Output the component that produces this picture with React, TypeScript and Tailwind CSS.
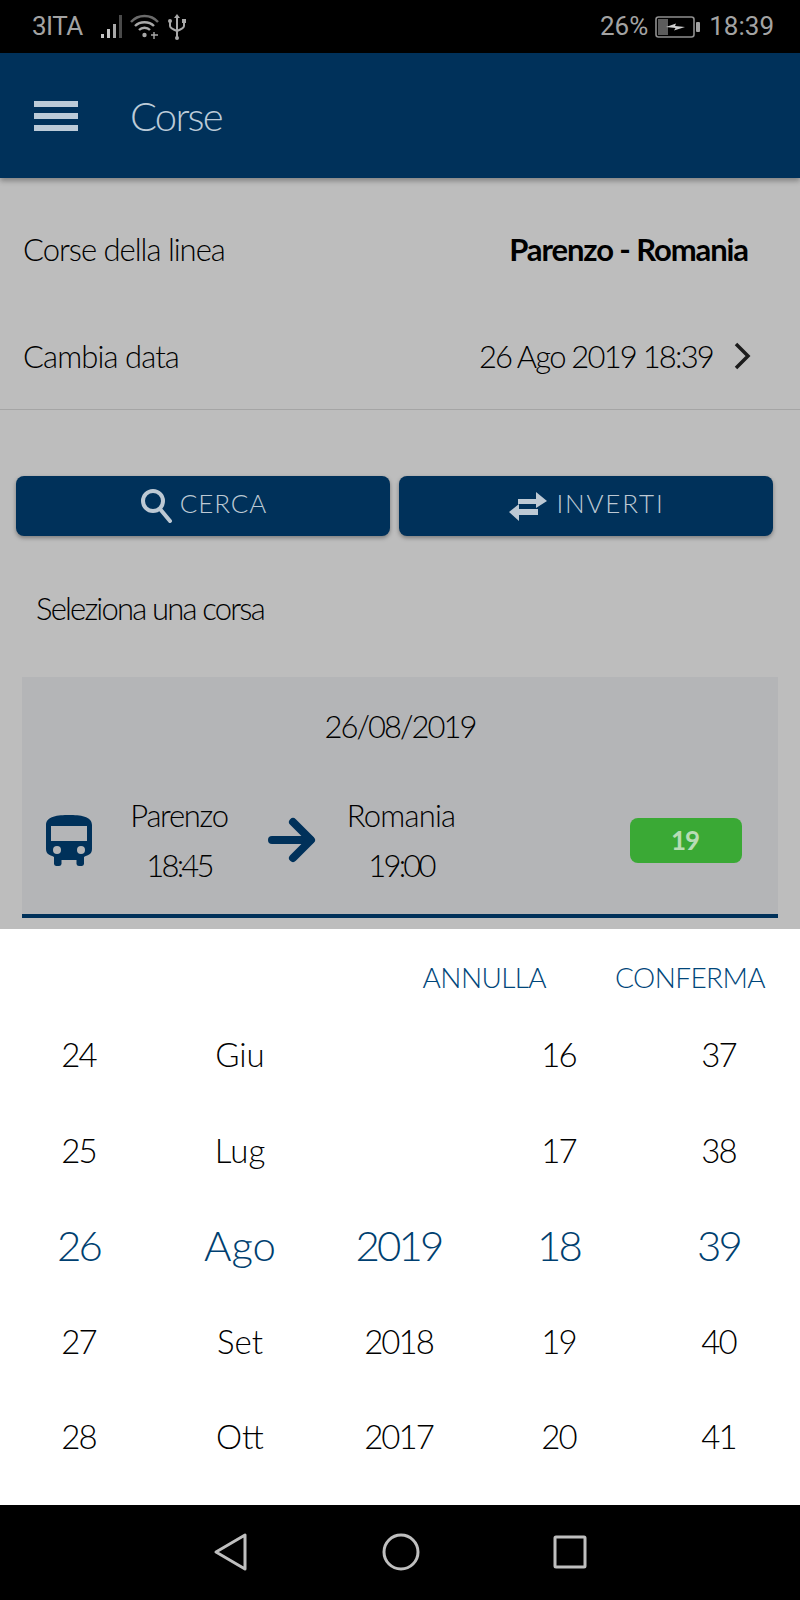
import React from "react";

const font = { fontFamily: "Lato, sans-serif" };

type Wheel = { items: string[]; selected: number; numeric: boolean };

const wheels: Wheel[] = [
  { items: ["24", "25", "26", "27", "28"], selected: 2, numeric: true },
  { items: ["Giu", "Lug", "Ago", "Set", "Ott"], selected: 2, numeric: false },
  { items: ["", "", "2019", "2018", "2017"], selected: 2, numeric: true },
  { items: ["16", "17", "18", "19", "20"], selected: 2, numeric: true },
  { items: ["37", "38", "39", "40", "41"], selected: 2, numeric: true },
];

function StatusBar() {
  return (
    <div className="h-[53px] shrink-0 bg-black flex items-center justify-between pl-[32px] pr-[26px] text-[#a3a3a3] text-[26px] font-['Roboto',sans-serif]">
      <div className="flex items-center">
        <span className="tracking-[-0.5px]">3ITA</span>
        <svg width="26" height="26" viewBox="0 0 26 26" className="ml-[18px]">
          <rect x="0" y="20" width="3" height="4" fill="#c4c4c4" />
          <rect x="6" y="15" width="3" height="9" fill="#c4c4c4" />
          <rect x="12" y="10" width="3" height="14" fill="#a8a8a8" />
          <rect x="18" y="1" width="3" height="23" fill="#4a4a4a" />
        </svg>
        <svg width="30" height="28" viewBox="0 0 30 28" className="ml-[3px]" fill="none" stroke="#a8a8a8" strokeWidth="2.4">
          <path d="M1 9 C8 1 21 1 28 9" stroke="#6b6b6b" />
          <path d="M5 13 C10 8 19 8 24 13" />
          <path d="M9 17 C12 14 17 14 20 17" />
          <circle cx="14.5" cy="22" r="2.2" fill="#a8a8a8" stroke="none" />
          <path d="M21 22 h7 M24 19 v7" strokeWidth="1.4" />
        </svg>
        <svg width="20" height="28" viewBox="0 0 20 28" className="ml-[7px]" fill="none" stroke="#a8a8a8" strokeWidth="2">
          <path d="M10 4 V25" />
          <path d="M3 9 V13 C3 15 5 16 10 18 C15 16 17 15 17 13 V9" />
          <path d="M10 1 L7 5 H13 Z" fill="#a8a8a8" stroke="none" />
          <circle cx="3" cy="8" r="2" fill="#a8a8a8" stroke="none" />
          <rect x="15" y="6" width="4" height="4" fill="#a8a8a8" stroke="none" />
          <circle cx="10" cy="25" r="2" fill="#a8a8a8" stroke="none" />
        </svg>
      </div>
      <div className="flex items-center">
        <span>26%</span>
        <svg width="46" height="24" viewBox="0 0 46 24" className="ml-[7px]">
          <rect x="1" y="2" width="38" height="20" rx="2.5" fill="none" stroke="#8f8f8f" strokeWidth="1.6" />
          <rect x="3" y="4" width="10" height="16" fill="#5c5c5c" />
          <rect x="41" y="7" width="4" height="10" rx="1" fill="#a3a3a3" />
          <path d="M11 12 L21 8.5 L20 11 L30 12 L19 15.5 L20.5 13 Z" fill="#d0d0d0" />
        </svg>
        <span className="ml-[8px]">18:39</span>
      </div>
    </div>
  );
}

function TopBar() {
  return (
    <div className="h-[125px] shrink-0 bg-[#00315a] flex items-center pl-[34px] shadow-[0_3px_5px_rgba(0,0,0,0.3)] relative">
      <div className="w-[44px] flex flex-col gap-[6px]">
        <div className="h-[6px] bg-[#bccbd8]" />
        <div className="h-[6px] bg-[#bccbd8]" />
        <div className="h-[6px] bg-[#bccbd8]" />
      </div>
      <span className="ml-[52px] text-[40px] font-light text-[#bccbd8] tracking-[-1.8px]">Corse</span>
    </div>
  );
}

function SearchIcon() {
  return (
    <svg width="34" height="36" viewBox="0 0 34 36" fill="none" stroke="#bdc9d4" strokeWidth="4">
      <circle cx="14" cy="13" r="10" />
      <path d="M21 21 L31 33" strokeLinecap="round" />
    </svg>
  );
}

function SwapIcon() {
  return (
    <svg width="40" height="32" viewBox="0 0 40 32" fill="#bdc9d4">
      <path d="M10 9 H28 V2 L39 11 L28 18 V14 H10 Z" />
      <path d="M30 19 H11 V14 L1 22 L11 31 V25 H30 Z" />
    </svg>
  );
}

function BusIcon() {
  return (
    <svg width="48" height="52" viewBox="0 0 48 52" fill="#00315a" className="mt-[2px]">
      <path d="M9 42 V49 A2.5 2.5 0 0 0 11.5 51 H14 A2.5 2.5 0 0 0 16.5 49 V45 H31.5 V49 A2.5 2.5 0 0 0 34 51 H36.5 A2.5 2.5 0 0 0 39 49 V42 C42 40 47 40 47 34 V10 C47 1 35 0 24 0 C13 0 1 1 1 10 V34 C1 40 6 40 9 42 Z" />
      <rect x="6" y="11" width="36" height="15" fill="#b4b5b7" />
      <circle cx="12" cy="35" r="4" fill="#b4b5b7" />
      <circle cx="36" cy="35" r="4" fill="#b4b5b7" />
    </svg>
  );
}

function ArrowIcon() {
  return (
    <svg width="48" height="46" viewBox="0 0 48 46" fill="none" stroke="#00315a" strokeWidth="8" strokeLinecap="round" strokeLinejoin="round">
      <path d="M4 23 H42" />
      <path d="M25 5 L43 23 L25 41" />
    </svg>
  );
}

function Behind() {
  return (
    <div className="flex-1 min-h-0 overflow-hidden bg-[#bdbdbd] text-black text-[31px] tracking-[-1px] font-light">
      <div className="h-[105px] flex items-center justify-between pl-[23px] pr-[52px] pt-[37px]">
        <span>Corse della linea</span>
        <span className="font-bold tracking-[-1.1px]">Parenzo - Romania</span>
      </div>
      <div className="h-[127px] flex items-center justify-between pl-[23px] pr-[47px] pt-[20px] border-b border-[#a5a5a5]">
        <span className="tracking-[-0.9px]">Cambia data</span>
        <div className="flex items-center">
          <span className="tracking-[-1.8px]">26 Ago 2019 18:39</span>
          <svg width="20" height="30" viewBox="0 0 20 30" className="ml-[20px]" fill="none" stroke="#1c1c1c" strokeWidth="3.5">
            <path d="M3 3 L15 15 L3 27" />
          </svg>
        </div>
      </div>
      <div className="flex gap-[9px] mt-[66px] pl-[16px] pr-[27px]">
        <button className="w-[374px] h-[60px] rounded-[8px] bg-[#00315a] shadow-[0_2px_4px_rgba(0,0,0,0.35)] flex items-center justify-center gap-[7px] text-[#bdc9d4] text-[26px] tracking-[0.9px]">
          <SearchIcon />
          <span className="pb-[6px]">CERCA</span>
        </button>
        <button className="w-[374px] h-[60px] rounded-[8px] bg-[#00315a] shadow-[0_2px_4px_rgba(0,0,0,0.35)] flex items-center justify-center gap-[9px] text-[#bdc9d4] text-[26px] tracking-[1.8px]">
          <SwapIcon />
          <span className="pb-[6px]">INVERTI</span>
        </button>
      </div>
      <p className="mt-[52px] ml-[36px] leading-[40px] tracking-[-1.8px]">Seleziona una corsa</p>
      <div className="mt-[49px] mx-[22px] h-[241px] bg-[#b4b5b7] border-b-[4px] border-[#00315a]">
        <div className="h-[98px] flex items-center justify-center tracking-[-2px]">26/08/2019</div>
        <div className="flex items-center mt-[15px] pl-[23px] pr-[36px]">
          <BusIcon />
          <div className="w-[110px] ml-[31px] text-center leading-[50px] tracking-[-1.3px]">
            <div>Parenzo</div>
            <div className="tracking-[-2.8px]">18:45</div>
          </div>
          <div className="ml-[34px]"><ArrowIcon /></div>
          <div className="w-[120px] ml-[25px] text-center leading-[50px] tracking-[-0.8px]">
            <div>Romania</div>
            <div className="tracking-[-2.8px]">19:00</div>
          </div>
          <div className="ml-auto w-[112px] h-[45px] rounded-[8px] bg-[#3aa935] flex items-center justify-center text-[#b8dcb5] text-[26px] font-bold tracking-[-1px] pr-[2px]">
            19
          </div>
        </div>
      </div>
    </div>
  );
}

function DatePicker() {
  return (
    <div className="h-[576px] shrink-0 bg-white font-light">
      <div className="h-[78px] pt-[18px] flex items-center justify-end pr-[35px] gap-[69px] text-[#00467a] text-[28px] tracking-[-0.6px]">
        <span>ANNULLA</span>
        <span>CONFERMA</span>
      </div>
      <div className="grid grid-cols-5">
        {wheels.map((wheel, col) => (
          <div key={col} className={wheel.numeric ? "flex flex-col tracking-[-2px] pr-[3px]" : "flex flex-col"}>
            {wheel.items.map((item, row) =>
              row === wheel.selected ? (
                <div
                  key={row}
                  className={
                    wheel.numeric
                      ? "h-[95.5px] flex items-center justify-center text-[#003f70] text-[42px] tracking-[-2.8px]"
                      : "h-[95.5px] flex items-center justify-center text-[#003f70] text-[42px]"
                  }
                >
                  {item}
                </div>
              ) : (
                <div key={row} className="h-[95.5px] flex items-center justify-center text-black text-[33px]">
                  {item}
                </div>
              )
            )}
          </div>
        ))}
      </div>
    </div>
  );
}

function NavBar() {
  return (
    <div className="h-[95px] shrink-0 bg-black flex items-center justify-center gap-[133px] pb-[2px]">
      <svg width="36" height="40" viewBox="0 0 36 40" fill="none" stroke="#bfbfbf" strokeWidth="3" strokeLinejoin="round">
        <path d="M32 3 V37 L3 20 Z" />
      </svg>
      <svg width="38" height="38" viewBox="0 0 38 38" fill="none" stroke="#bfbfbf" strokeWidth="3">
        <circle cx="19" cy="19" r="17" />
      </svg>
      <svg width="34" height="34" viewBox="0 0 34 34" fill="none" stroke="#bfbfbf" strokeWidth="3" strokeLinejoin="round">
        <rect x="2" y="2" width="30" height="30" rx="1" />
      </svg>
    </div>
  );
}

export default function App() {
  return (
    <div className="w-[800px] h-[1600px] flex flex-col overflow-hidden" style={font}>
      <StatusBar />
      <TopBar />
      <Behind />
      <DatePicker />
      <NavBar />
    </div>
  );
}
